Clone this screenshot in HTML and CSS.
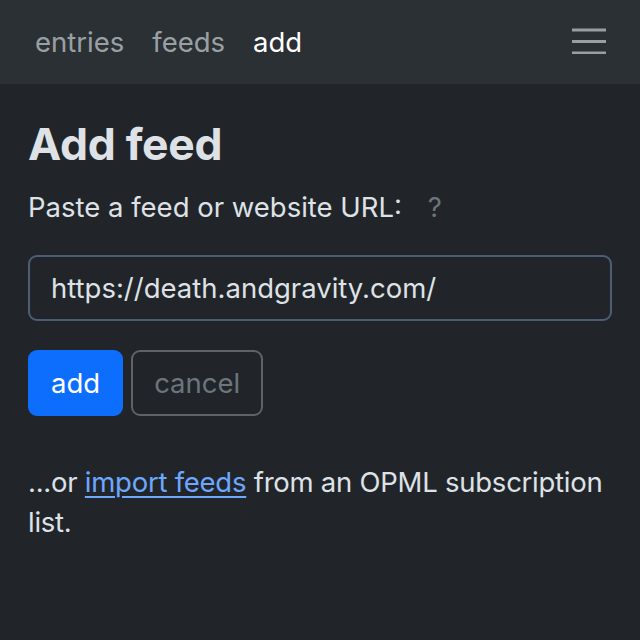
FILE: index.html
```html
<!DOCTYPE html>
<html lang="en">
<head>
<meta charset="utf-8">
<title>Add feed</title>
<link rel="stylesheet" href="styles.css">
</head>
<body>
<nav class="navbar">
  <div class="nav-links">
    <a class="nav-link" href="#">entries</a>
    <a class="nav-link" href="#">feeds</a>
    <a class="nav-link active" href="#">add</a>
  </div>
  <button class="toggler" aria-label="menu">
    <svg width="34" height="26" viewBox="0 0 34 26">
      <g stroke="#9a9da1" stroke-width="3">
        <line x1="0" y1="2" x2="34" y2="2"/>
        <line x1="0" y1="13.5" x2="34" y2="13.5"/>
        <line x1="0" y1="25" x2="34" y2="25"/>
      </g>
    </svg>
  </button>
</nav>
<main class="container">
  <h1 class="title">Add feed</h1>
  <form class="form">
    <label class="label">Paste a feed or website URL: <span class="help">?</span></label>
    <input class="input" type="text" value="https://death.andgravity.com/">
    <div class="buttons">
      <button class="btn btn-primary" type="button">add</button>
      <button class="btn btn-outline" type="button">cancel</button>
    </div>
  </form>
  <p class="note">...or <a class="link" href="#">import feeds</a> from an OPML subscription list.</p>
</main>
</body>
</html>
```
FILE: styles.css
```css
html, body {
  margin: 0;
  padding: 0;
}
body {
  background: #212529;
  color: #dee2e6;
  font-family: Inter, "Noto Sans", sans-serif;
  font-size: 27.5px;
  line-height: 40px;
}
.navbar {
  background: #2b3035;
  height: 84px;
  display: flex;
  align-items: center;
  justify-content: space-between;
  padding: 0 34px 0 35px;
  box-sizing: border-box;
}
.nav-links {
  display: flex;
  gap: 28px;
}
.nav-link {
  color: rgba(222, 226, 230, 0.65);
  text-decoration: none;
}
.nav-link.active {
  color: #fff;
}
.toggler {
  background: none;
  border: 0;
  padding: 0;
  display: flex;
  margin-top: -2px;
}
.container {
  padding: 32px 28px 0;
}
.title {
  font-size: 44.5px;
  font-weight: 700;
  line-height: 56px;
  margin: 0;
  letter-spacing: -0.3px;
}
.form {
  margin-top: 15px;
}
.label {
  display: block;
}
.help {
  color: #6c757d;
  margin-left: 18px;
}
.input {
  display: block;
  box-sizing: border-box;
  width: 100%;
  height: 66px;
  margin-top: 28px;
  padding: 12px 21px;
  font: inherit;
  color: #dee2e6;
  background: #212529;
  border: 2px solid #4d5c77;
  border-radius: 9px;
  outline: none;
}
.buttons {
  display: flex;
  gap: 8px;
  margin-top: 29px;
}
.btn {
  font: inherit;
  height: 66px;
  padding: 0 21px;
  border-radius: 9px;
  border: 2px solid transparent;
  box-sizing: border-box;
}
.btn-primary {
  background: #0d6efd;
  border-color: #0d6efd;
  color: #fff;
}
.btn-outline {
  background: transparent;
  border-color: #5c636a;
  color: #6c757d;
}
.note {
  margin: 46px 0 0;
  letter-spacing: -0.25px;
}
.link {
  color: #6ea8fe;
  text-decoration: underline;
  text-underline-offset: 4px;
  text-decoration-thickness: 1.5px;
}
```
